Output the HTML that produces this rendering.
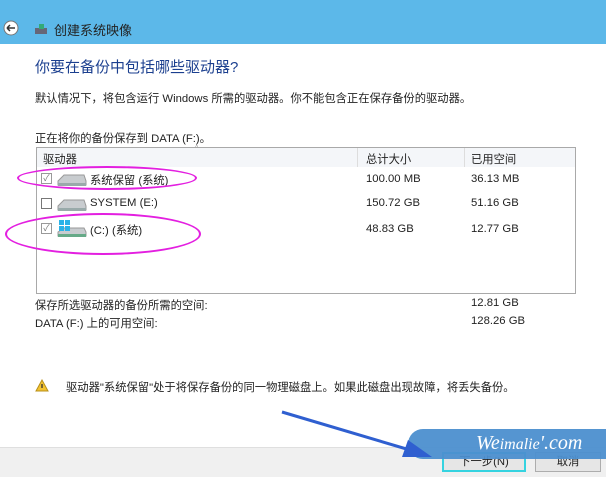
<!DOCTYPE html>
<html><head><meta charset="utf-8"><style>
*{margin:0;padding:0;box-sizing:border-box}
body{width:606px;height:477px;overflow:hidden;background:#fff;font-family:"Liberation Sans","Noto Sans CJK SC",sans-serif;position:relative;color:#222;font-size:11.3px}
.a{position:absolute;white-space:nowrap}
</style></head><body>
<div class="a" style="left:0;top:0;width:606px;height:44px;background:#5cb8e9"></div>
<svg class="a" style="left:3px;top:20px" width="16" height="16"><circle cx="8" cy="8" r="7" fill="#fff" stroke="#777" stroke-width="1"/><path d="M4 8h8M4 8l3-3M4 8l3 3" stroke="#333" stroke-width="1.5" fill="none"/></svg>
<svg class="a" style="left:34px;top:23px" width="14" height="12"><rect x="1" y="5" width="12" height="6" fill="#667"/><rect x="5" y="1" width="5" height="5" fill="#3a7"/></svg>
<div class="a" style="left:54px;top:20px;font-size:13px;color:#222">创建系统映像</div>
<div class="a" style="left:35px;top:56px;font-size:15px;color:#1b3f8f">你要在备份中包括哪些驱动器?</div>
<div class="a" style="left:35px;top:90px">默认情况下，将包含运行 Windows 所需的驱动器。你不能包含正在保存备份的驱动器。</div>
<div class="a" style="left:35px;top:130px">正在将你的备份保存到 DATA (F:)。</div>
<div class="a" style="left:36px;top:147px;width:540px;height:147px;border:1px solid #a9a9a9"></div>
<div class="a" style="left:37px;top:148px;width:538px;height:19px;background:#f4f6f9"></div>
<div class="a" style="left:357px;top:148px;width:1px;height:19px;background:#ddd"></div>
<div class="a" style="left:464px;top:148px;width:1px;height:19px;background:#ddd"></div>
<div class="a" style="left:43px;top:151px">驱动器</div>
<div class="a" style="left:195px;top:145px;font-size:7px;color:#999">^</div>
<div class="a" style="left:366px;top:151px">总计大小</div>
<div class="a" style="left:471px;top:151px">已用空间</div>
<div class="a" style="left:41px;top:173px;width:11px;height:11px;border:1px solid #999;color:#777;font-size:9px;line-height:9px;text-align:center">✓</div>
<div class="a" style="left:41px;top:198px;width:11px;height:11px;border:1px solid #777"></div>
<div class="a" style="left:41px;top:223px;width:11px;height:11px;border:1px solid #999;color:#777;font-size:9px;line-height:9px;text-align:center">✓</div>
<svg class="a" style="left:56px;top:172px" width="32" height="16"><path d="M2 9l6-6h20l2 6v4H2z" fill="#c8cccf" stroke="#999"/><rect x="2" y="11" width="28" height="3" fill="#9aa"/></svg>
<svg class="a" style="left:56px;top:197px" width="32" height="16"><path d="M2 9l6-6h20l2 6v4H2z" fill="#c8cccf" stroke="#999"/><rect x="2" y="11" width="28" height="3" fill="#9aa"/></svg>
<svg class="a" style="left:56px;top:219px" width="32" height="20"><path d="M2 13l6-4h20l2 4v4H2z" fill="#c8cccf" stroke="#999"/><rect x="2" y="15" width="28" height="3" fill="#6a8"/><rect x="3" y="1" width="5" height="5" fill="#2bb3e8"/><rect x="9" y="1" width="5" height="5" fill="#2bb3e8"/><rect x="3" y="7" width="5" height="5" fill="#2bb3e8"/><rect x="9" y="7" width="5" height="5" fill="#2bb3e8"/></svg>
<div class="a" style="left:90px;top:172px">系统保留 (系统)</div>
<div class="a" style="left:90px;top:197px">SYSTEM (E:)</div>
<div class="a" style="left:90px;top:222px">(C:) (系统)</div>
<div class="a" style="left:366px;top:173px">100.00 MB</div>
<div class="a" style="left:471px;top:173px">36.13 MB</div>
<div class="a" style="left:366px;top:197px">150.72 GB</div>
<div class="a" style="left:471px;top:197px">51.16 GB</div>
<div class="a" style="left:366px;top:223px">48.83 GB</div>
<div class="a" style="left:471px;top:223px">12.77 GB</div>
<div class="a" style="left:17px;top:166px;width:180px;height:24px;border:2px solid #e31fe0;border-radius:50%"></div>
<div class="a" style="left:5px;top:213px;width:196px;height:42px;border:2px solid #e31fe0;border-radius:50%"></div>
<div class="a" style="left:35px;top:297px">保存所选驱动器的备份所需的空间:</div>
<div class="a" style="left:471px;top:297px">12.81 GB</div>
<div class="a" style="left:35px;top:315px">DATA (F:) 上的可用空间:</div>
<div class="a" style="left:471px;top:315px">128.26 GB</div>
<svg class="a" style="left:35px;top:379px" width="14" height="13"><path d="M7 1L13 12H1z" fill="#f2c230" stroke="#b8901a"/><path d="M7 5v4" stroke="#333" stroke-width="1.3"/></svg>
<div class="a" style="left:66px;top:379px">驱动器"系统保留"处于将保存备份的同一物理磁盘上。如果此磁盘出现故障，将丢失备份。</div>
<div class="a" style="left:0;top:447px;width:606px;height:30px;background:#f0f0f0;border-top:1px solid #dfdfdf"></div>
<div class="a" style="left:442px;top:452px;width:84px;height:20px;border:2px solid #35d3e0;background:#e6e6e6;text-align:center;line-height:16px">下一步(N)</div>
<div class="a" style="left:535px;top:452px;width:66px;height:20px;border:1px solid #adadad;background:#e6e6e6;text-align:center;line-height:18px">取消</div>
<div class="a" style="left:408px;top:429px;width:200px;height:30px;background:#4c8fcf;border-radius:15px 0 0 15px;opacity:.95"></div>
<div class="a" style="left:476px;top:432px;font-family:'Liberation Serif',serif;font-style:italic;font-size:20px;color:#fff">We<span style="font-size:16px">imalie</span>'.com</div>
<svg class="a" style="left:270px;top:405px" width="180" height="60"><path d="M12 7L150 48" stroke="#2f5fd0" stroke-width="3"/><path d="M162 52L138 35L132 52z" fill="#2f5fd0"/></svg>
</body></html>
